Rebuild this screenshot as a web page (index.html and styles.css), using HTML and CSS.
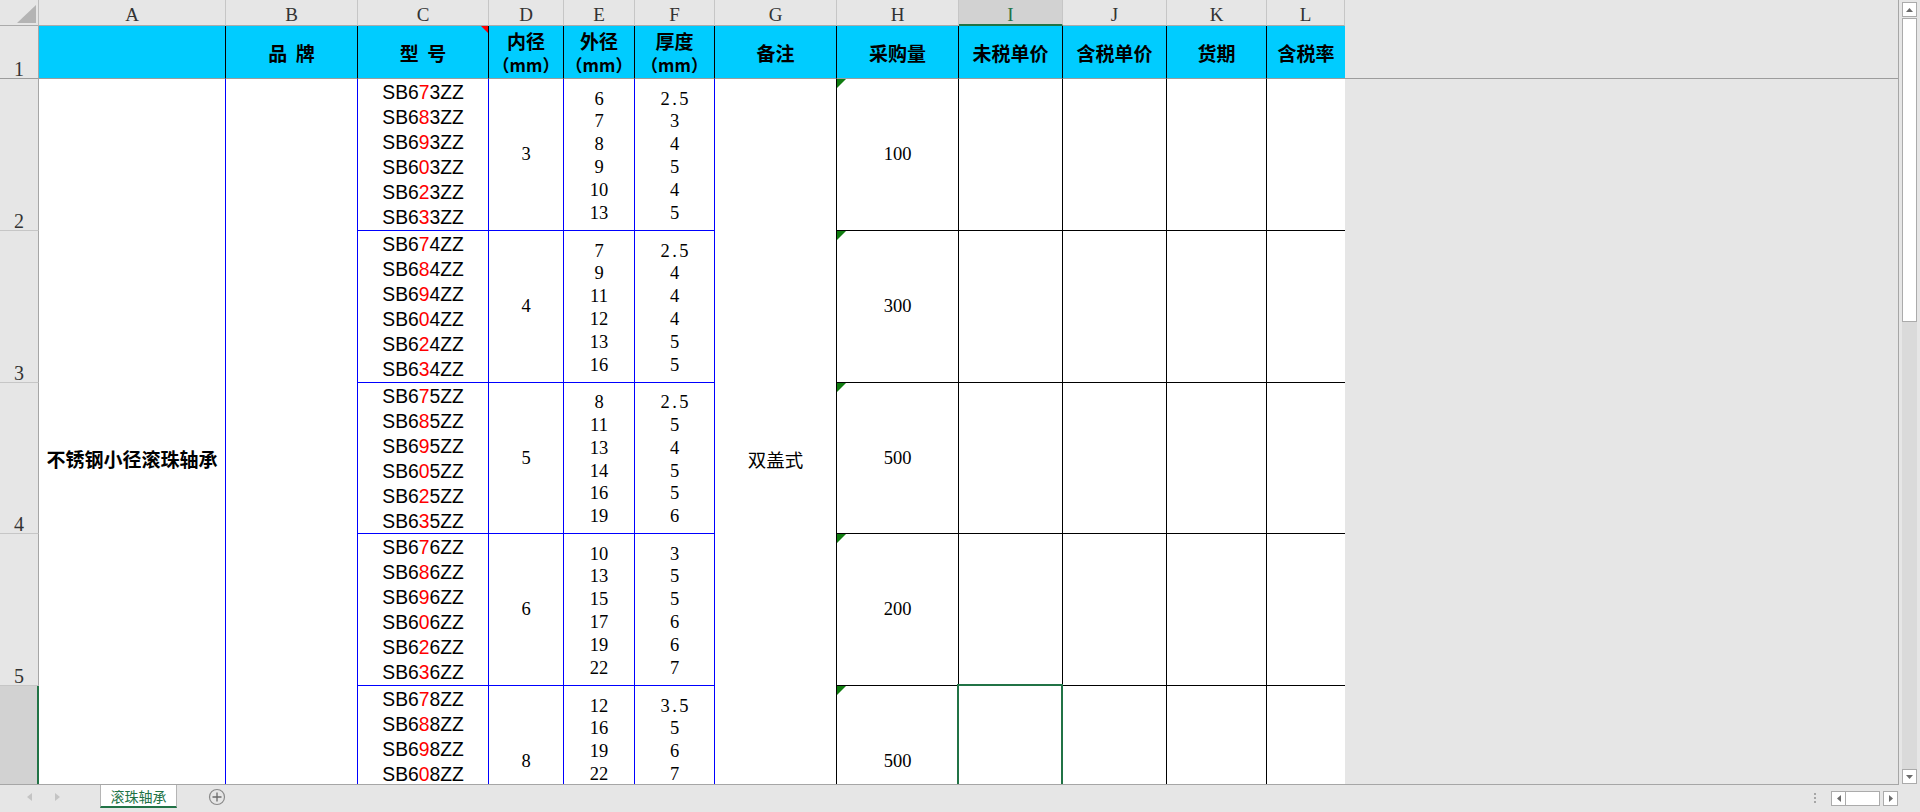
FILE: index.html
```html
<!DOCTYPE html>
<html lang="zh-CN">
<head>
  <meta charset="UTF-8">
  <meta name="viewport" content="width=device-width, initial-scale=1.0">
  <title>滚珠轴承</title>
  <link rel="stylesheet" href="styles.css">
</head>
<body>
  <div class="window">
    <div class="viewport">
      <div class="sheet">
        <!-- column letters -->
        <div class="corner"><span class="corner-mark"></span></div>
        <div class="col-hd">A</div>
        <div class="col-hd">B</div>
        <div class="col-hd">C</div>
        <div class="col-hd">D</div>
        <div class="col-hd">E</div>
        <div class="col-hd">F</div>
        <div class="col-hd">G</div>
        <div class="col-hd">H</div>
        <div class="col-hd active">I</div>
        <div class="col-hd">J</div>
        <div class="col-hd">K</div>
        <div class="col-hd">L</div>

        <!-- row 1: titles (frozen) -->
        <div class="row-hd first">1</div>
        <div class="title"></div>
        <div class="title">品&nbsp; 牌</div>
        <div class="title note">型&nbsp; 号</div>
        <div class="title"><p>内径</p><p class="unit">（mm）</p></div>
        <div class="title"><p>外径</p><p class="unit">（mm）</p></div>
        <div class="title"><p>厚度</p><p class="unit">（mm）</p></div>
        <div class="title">备注</div>
        <div class="title">采购量</div>
        <div class="title">未税单价</div>
        <div class="title">含税单价</div>
        <div class="title">货期</div>
        <div class="title last">含税率</div>
        <div class="freeze"></div>

        <!-- row 2 -->
        <div class="row-hd">2</div>
        <div class="cell name">不锈钢小径滚珠轴承</div>
        <div class="cell brand"></div>
        <div class="cell model">
          <p>SB6<span class="d">7</span>3ZZ</p><p>SB6<span class="d">8</span>3ZZ</p><p>SB6<span class="d">9</span>3ZZ</p>
          <p>SB6<span class="d">0</span>3ZZ</p><p>SB6<span class="d">2</span>3ZZ</p><p>SB6<span class="d">3</span>3ZZ</p>
        </div>
        <div class="cell num">3</div>
        <div class="cell list"><p>6</p><p>7</p><p>8</p><p>9</p><p>10</p><p>13</p></div>
        <div class="cell list"><p>2<span class="dot">.</span>5</p><p>3</p><p>4</p><p>5</p><p>4</p><p>5</p></div>
        <div class="cell remark">双盖式</div>
        <div class="cell qty">100</div>
        <div class="cell price"></div>
        <div class="cell price"></div>
        <div class="cell price"></div>
        <div class="cell price last"></div>

        <!-- row 3 -->
        <div class="row-hd">3</div>
        <div class="cell model">
          <p>SB6<span class="d">7</span>4ZZ</p><p>SB6<span class="d">8</span>4ZZ</p><p>SB6<span class="d">9</span>4ZZ</p>
          <p>SB6<span class="d">0</span>4ZZ</p><p>SB6<span class="d">2</span>4ZZ</p><p>SB6<span class="d">3</span>4ZZ</p>
        </div>
        <div class="cell num">4</div>
        <div class="cell list"><p>7</p><p>9</p><p>11</p><p>12</p><p>13</p><p>16</p></div>
        <div class="cell list"><p>2<span class="dot">.</span>5</p><p>4</p><p>4</p><p>4</p><p>5</p><p>5</p></div>
        <div class="cell qty">300</div>
        <div class="cell price"></div>
        <div class="cell price"></div>
        <div class="cell price"></div>
        <div class="cell price last"></div>

        <!-- row 4 -->
        <div class="row-hd">4</div>
        <div class="cell model">
          <p>SB6<span class="d">7</span>5ZZ</p><p>SB6<span class="d">8</span>5ZZ</p><p>SB6<span class="d">9</span>5ZZ</p>
          <p>SB6<span class="d">0</span>5ZZ</p><p>SB6<span class="d">2</span>5ZZ</p><p>SB6<span class="d">3</span>5ZZ</p>
        </div>
        <div class="cell num">5</div>
        <div class="cell list"><p>8</p><p>11</p><p>13</p><p>14</p><p>16</p><p>19</p></div>
        <div class="cell list"><p>2<span class="dot">.</span>5</p><p>5</p><p>4</p><p>5</p><p>5</p><p>6</p></div>
        <div class="cell qty">500</div>
        <div class="cell price"></div>
        <div class="cell price"></div>
        <div class="cell price"></div>
        <div class="cell price last"></div>

        <!-- row 5 -->
        <div class="row-hd">5</div>
        <div class="cell model">
          <p>SB6<span class="d">7</span>6ZZ</p><p>SB6<span class="d">8</span>6ZZ</p><p>SB6<span class="d">9</span>6ZZ</p>
          <p>SB6<span class="d">0</span>6ZZ</p><p>SB6<span class="d">2</span>6ZZ</p><p>SB6<span class="d">3</span>6ZZ</p>
        </div>
        <div class="cell num">6</div>
        <div class="cell list"><p>10</p><p>13</p><p>15</p><p>17</p><p>19</p><p>22</p></div>
        <div class="cell list"><p>3</p><p>5</p><p>5</p><p>6</p><p>6</p><p>7</p></div>
        <div class="cell qty">200</div>
        <div class="cell price"></div>
        <div class="cell price"></div>
        <div class="cell price"></div>
        <div class="cell price last"></div>

        <!-- row 6 -->
        <div class="row-hd active">6</div>
        <div class="cell model">
          <p>SB6<span class="d">7</span>8ZZ</p><p>SB6<span class="d">8</span>8ZZ</p><p>SB6<span class="d">9</span>8ZZ</p>
          <p>SB6<span class="d">0</span>8ZZ</p><p>SB6<span class="d">2</span>8ZZ</p><p>SB6<span class="d">3</span>8ZZ</p>
        </div>
        <div class="cell num">8</div>
        <div class="cell list"><p>12</p><p>16</p><p>19</p><p>22</p><p>24</p><p>28</p></div>
        <div class="cell list"><p>3<span class="dot">.</span>5</p><p>5</p><p>6</p><p>7</p><p>8</p><p>9</p></div>
        <div class="cell qty">500</div>
        <div class="cell price selected"></div>
        <div class="cell price"></div>
        <div class="cell price"></div>
        <div class="cell price last"></div>
      </div>
    </div>

    <div class="vscroll">
      <div class="sb-btn">
        <svg width="7" height="4" viewBox="0 0 7 4"><path d="M3.5 0L7 4H0z" fill="#6b6b6b"/></svg>
      </div>
      <div class="vthumb"></div>
      <div class="vtrack"></div>
      <div class="sb-btn">
        <svg width="7" height="4" viewBox="0 0 7 4"><path d="M0 0h7L3.5 4z" fill="#6b6b6b"/></svg>
      </div>
    </div>

    <div class="tabbar">
      <div class="nav">
        <svg width="5" height="8" viewBox="0 0 5 8"><path d="M5 0v8L0 4z" fill="#c4c4c4"/></svg>
        <svg width="5" height="8" viewBox="0 0 5 8"><path d="M0 0v8l5-4z" fill="#c4c4c4"/></svg>
      </div>
      <div class="tab">滚珠轴承</div>
      <svg class="add" width="18" height="18" viewBox="0 0 18 18">
        <circle cx="9" cy="9" r="7.5" fill="none" stroke="#8a8a8a" stroke-width="1.2"/>
        <path d="M9 4.5v9M4.5 9h9" stroke="#6b6b6b" stroke-width="1.3"/>
      </svg>
      <div class="spacer"></div>
      <div class="grip"><i></i><i></i><i></i></div>
      <div class="hscroll">
        <div class="sb-btn">
          <svg width="4" height="7" viewBox="0 0 4 7"><path d="M4 0v7L0 3.5z" fill="#6b6b6b"/></svg>
        </div>
        <div class="hthumb"></div>
        <div class="sb-btn right">
          <svg width="4" height="7" viewBox="0 0 4 7"><path d="M0 0v7l4-3.5z" fill="#6b6b6b"/></svg>
        </div>
      </div>
    </div>
  </div>
</body>
</html>
```

FILE: styles.css
```css
* {
  box-sizing: border-box;
}
body {
  margin: 0;
  background-color: #e6e6e6;
  font-family: 'Liberation Serif', 'Noto Sans CJK SC', serif;
  color: #000;
}
p {
  margin: 0;
}
.window {
  width: 1920px;
  height: 812px;
  display: grid;
  grid-template-columns: 1899px 21px;
  grid-template-rows: 785px 27px;
  overflow: hidden;
}

/* sheet area */
.viewport {
  overflow: hidden;
  border-right: 1px solid #a6a6a6;
  border-bottom: 1px solid #a6a6a6;
}
.sheet {
  display: grid;
  grid-template-columns: 39px 187px 132px 131px 75px 71px 80px 122px 122px 104px 104px 100px 78px 1fr;
  grid-template-rows: 26px 53px 152px 152px 151px 152px 152px;
}
.corner {
  display: flex;
  justify-content: flex-end;
  align-items: flex-end;
  padding: 0 2px 2px 0;
  border-right: 1px solid #bdbdbd;
  border-bottom: 1px solid #ababab;
}
.corner-mark {
  width: 0;
  height: 0;
  border-bottom: 18px solid #b4b4b4;
  border-left: 19px solid transparent;
}
.col-hd {
  text-align: center;
  font-size: 19px;
  line-height: 23px;
  padding-top: 3px;
  color: #333;
  border-right: 1px solid #c6c6c6;
  border-bottom: 1px solid #ababab;
}
.col-hd.active {
  background-color: #d2d2d2;
  color: #217346;
  border-bottom: 2px solid #217346;
}
.row-hd {
  grid-column: 1;
  display: flex;
  justify-content: center;
  align-items: flex-end;
  font-size: 20px;
  line-height: 18px;
  color: #333;
  border-right: 1px solid #a6a6a6;
  border-bottom: 1px solid #c6c6c6;
}
.row-hd.first {
  border-bottom-color: #9c9c9c;
}
.row-hd.active {
  background-color: #d2d2d2;
  border-right: 2px solid #217346;
}

/* row 1 titles */
.title {
  position: relative;
  display: flex;
  flex-direction: column;
  justify-content: center;
  align-items: center;
  text-align: center;
  white-space: nowrap;
  background-color: #00ccff;
  font-family: 'Noto Sans CJK SC', sans-serif;
  font-weight: 700;
  font-size: 19px;
  line-height: 25px;
  padding-top: 1px;
  border-right: 1px solid #000;
  border-bottom: 1px solid #9c9c9c;
}
.title.last {
  border-right: none;
}
.title .unit {
  font-size: 17px;
  line-height: 24px;
}
.note::after {
  content: '';
  position: absolute;
  top: 0;
  right: 0;
  border-top: 7px solid #ff0000;
  border-left: 7px solid transparent;
}
.freeze {
  grid-column: 14;
  grid-row: 2;
  border-bottom: 1px solid #9c9c9c;
}

/* data cells */
.cell {
  position: relative;
  background-color: #fff;
  display: flex;
  flex-direction: column;
  justify-content: center;
  align-items: center;
  text-align: center;
  white-space: nowrap;
  font-size: 18.5px;
}
.name,
.brand,
.remark {
  grid-row: span 5;
}
.name {
  font-family: 'Noto Sans CJK SC', sans-serif;
  font-weight: 700;
  font-size: 19px;
  border-right: 1px solid #0000ff;
}
.brand {
  border-right: 1px solid #0000ff;
}
.model {
  justify-content: flex-start;
  padding-top: 1px;
  font-family: 'Liberation Sans', Arial, sans-serif;
  font-size: 19.3px;
  line-height: 25px;
  border-right: 1px solid #0000ff;
  border-bottom: 1px solid #0000ff;
}
.model .d {
  color: #ff0000;
}
.num,
.list {
  border-right: 1px solid #0000ff;
  border-bottom: 1px solid #0000ff;
}
.list {
  padding-top: 3px;
  line-height: 22.8px;
}
.list .dot {
  padding: 0 2.5px;
}
.remark {
  font-family: 'Noto Sans CJK SC', sans-serif;
  font-size: 18.5px;
  border-right: 1px solid #000;
}
.qty,
.price {
  border-right: 1px solid #000;
  border-bottom: 1px solid #000;
}
.price.last {
  border-right: none;
}
.qty::before {
  content: '';
  position: absolute;
  top: 0;
  left: 0;
  border-top: 9px solid #107c10;
  border-right: 9px solid transparent;
}
.selected::after {
  content: '';
  position: absolute;
  top: -2px;
  left: -2px;
  right: -1px;
  bottom: -2px;
  border: 2px solid #217346;
}

/* vertical scrollbar */
.vscroll {
  display: flex;
  flex-direction: column;
  padding: 2px 0 1px 3px;
  width: 21px;
}
.sb-btn {
  width: 15px;
  height: 15px;
  flex: none;
  display: flex;
  justify-content: center;
  align-items: center;
  background-color: #fff;
  border: 1px solid #ababab;
}
.vthumb {
  width: 15px;
  height: 304px;
  margin-top: 1px;
  background-color: #fff;
  border: 1px solid #ababab;
}
.vtrack {
  flex: 1;
  width: 15px;
  background-color: #dadada;
}

/* sheet tabs */
.tabbar {
  grid-column: 1 / span 2;
  display: flex;
  align-items: flex-start;
}
.nav {
  display: flex;
  gap: 23px;
  padding: 8px 0 0 27px;
}
.tab {
  width: 77px;
  height: 23px;
  margin-left: 40px;
  background-color: #fff;
  border-left: 1px solid #b5b5b5;
  border-right: 1px solid #b5b5b5;
  border-bottom: 2px solid #217346;
  text-align: center;
  font-family: 'Noto Sans CJK SC', sans-serif;
  font-size: 14px;
  line-height: 22px;
  color: #217346;
}
.add {
  margin: 3px 0 0 31px;
}
.spacer {
  flex: 1;
}
.grip {
  display: flex;
  flex-direction: column;
  gap: 2px;
  margin: 8px 15px 0 0;
}
.grip i {
  width: 2px;
  height: 2px;
  background-color: #a6a6a6;
}
.hscroll {
  display: flex;
  margin: 6px 22px 0 0;
}
.hthumb {
  width: 35px;
  height: 15px;
  margin-left: -1px;
  background-color: #fff;
  border: 1px solid #ababab;
}
.hscroll .right {
  margin-left: 3px;
}
```
